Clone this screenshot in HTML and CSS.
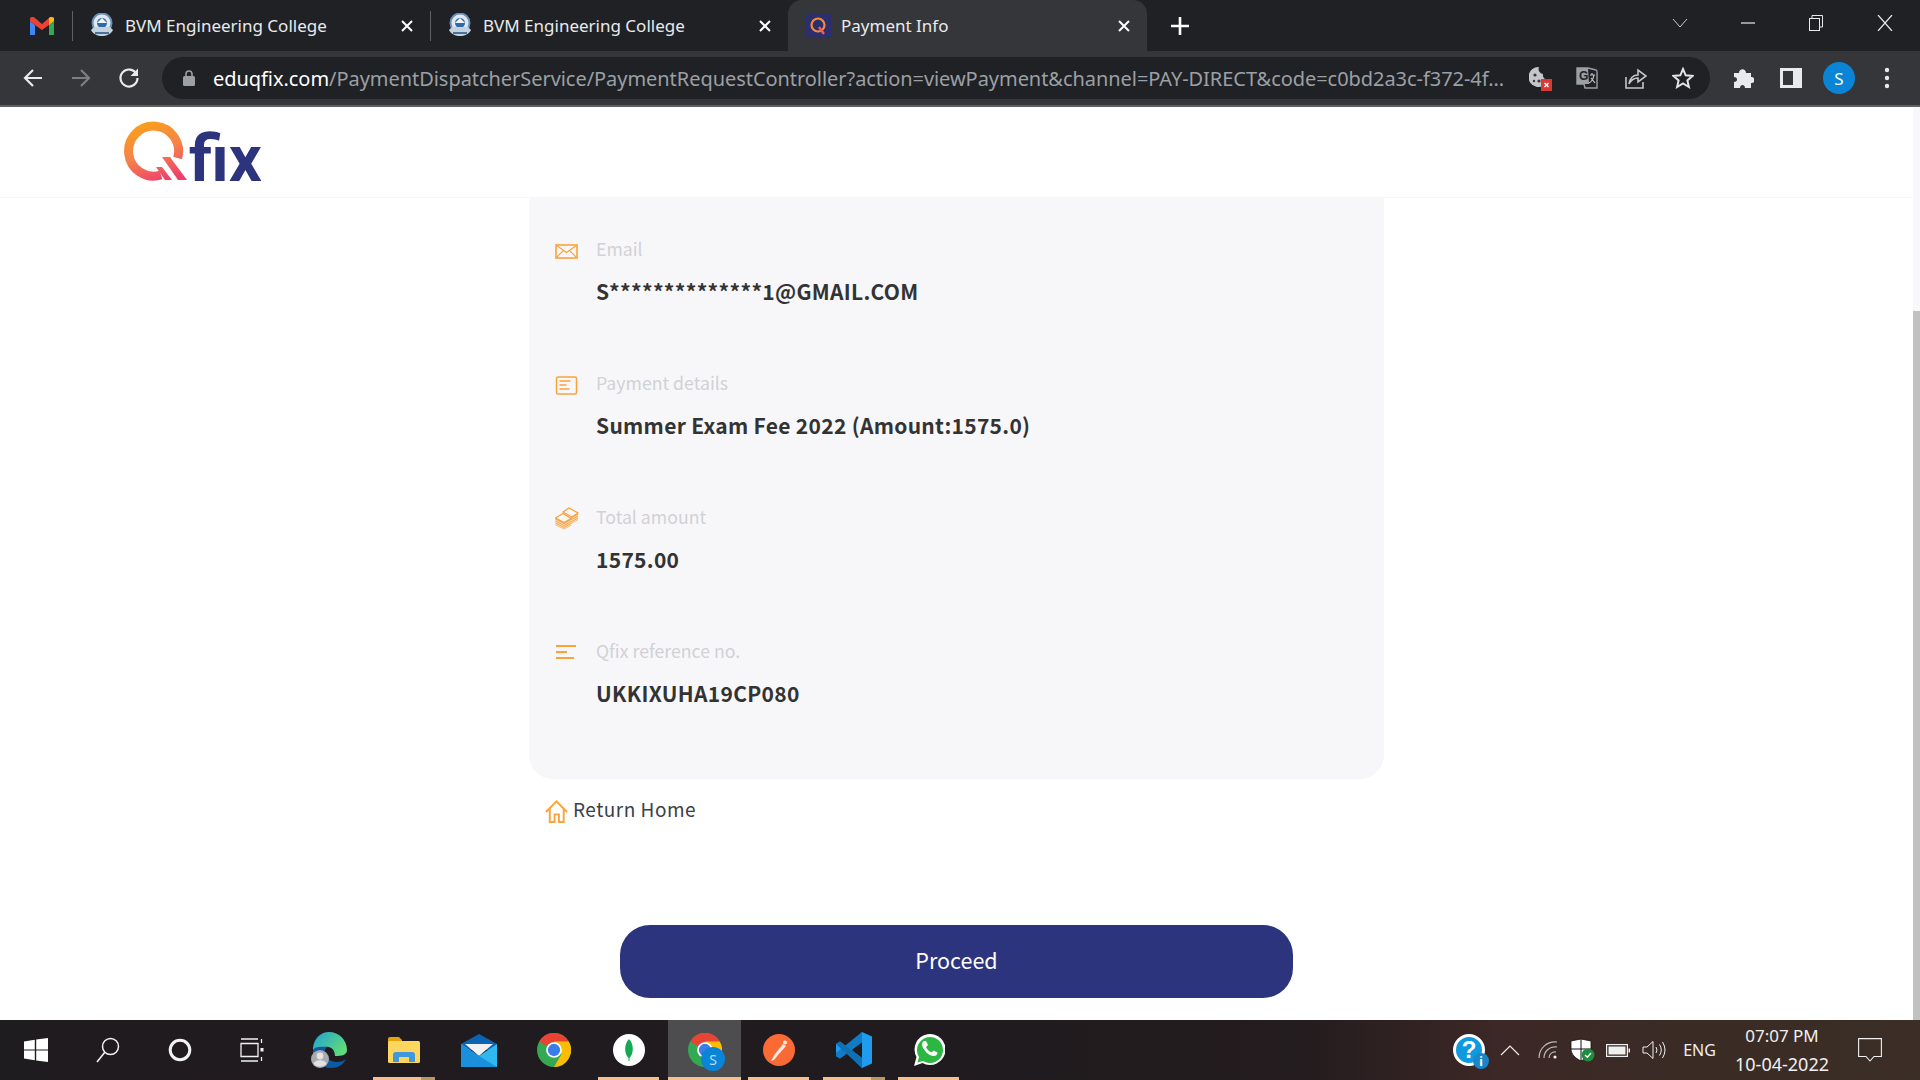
FILE: index.html
```html
<!DOCTYPE html>
<html lang="en">
<head>
    <meta charset="UTF-8">
    <title>Payment Info</title>
    <link rel="stylesheet" href="styles.css">
</head>
<body>

<!-- browser tabs -->
<div class="tabstrip">
    <div class="pinned-tab">
        <svg width="24" height="18" viewBox="0 0 24 18">
            <path d="M0 4 L0 18 L5 18 L5 8 Z" fill="#4285f4"/>
            <path d="M19 8 L19 18 L24 18 L24 4 Z" fill="#34a853"/>
            <path d="M0 2 C0 0 3 -1 5 1 L12 7 L19 1 C21 -1 24 0 24 2 L24 4 L19 8 L12 13 L5 8 L0 4 Z" fill="#ea4335"/>
            <path d="M19 1 C21 -1 24 0 24 2 L24 4 L19 8 Z" fill="#fbbc04"/>
        </svg>
    </div>
    <span class="tab-sep"></span>
    <div class="tab">
        <svg class="favicon" width="26" height="26" viewBox="0 0 26 26">
            <circle cx="13" cy="10" r="9.5" fill="#dfe8f0" stroke="#6c8fb5" stroke-width="2"/>
            <circle cx="13" cy="10" r="5" fill="#2f6aa8"/>
            <path d="M8 10 L18 10 L13 5 Z" fill="#f1f4f7"/>
            <path d="M2 17 C6 25 20 25 24 17 L21 14 L5 14 Z" fill="#c3d2df"/>
            <path d="M6 20 L20 20" stroke="#4c7199" stroke-width="2"/>
        </svg>
        <span class="tab-title">BVM Engineering College</span>
        <svg class="tab-close" width="12" height="12" viewBox="0 0 12 12"><path d="M1 1 L11 11 M11 1 L1 11" stroke="#fff" stroke-width="2"/></svg>
    </div>
    <span class="tab-sep"></span>
    <div class="tab">
        <svg class="favicon" width="26" height="26" viewBox="0 0 26 26">
            <circle cx="13" cy="10" r="9.5" fill="#dfe8f0" stroke="#6c8fb5" stroke-width="2"/>
            <circle cx="13" cy="10" r="5" fill="#2f6aa8"/>
            <path d="M8 10 L18 10 L13 5 Z" fill="#f1f4f7"/>
            <path d="M2 17 C6 25 20 25 24 17 L21 14 L5 14 Z" fill="#c3d2df"/>
            <path d="M6 20 L20 20" stroke="#4c7199" stroke-width="2"/>
        </svg>
        <span class="tab-title">BVM Engineering College</span>
        <svg class="tab-close" width="12" height="12" viewBox="0 0 12 12"><path d="M1 1 L11 11 M11 1 L1 11" stroke="#fff" stroke-width="2"/></svg>
    </div>
    <div class="tab tab-active">
        <svg class="favicon" width="25" height="25" viewBox="0 0 25 25">
            <rect width="25" height="25" rx="3" fill="#2b2f6b"/>
            <circle cx="12" cy="12" r="6.5" fill="none" stroke="#f58b3a" stroke-width="2.2"/>
            <path d="M13 14 L18 21" stroke="#ef5a5a" stroke-width="2.4"/>
        </svg>
        <span class="tab-title">Payment Info</span>
        <svg class="tab-close" width="12" height="12" viewBox="0 0 12 12"><path d="M1 1 L11 11 M11 1 L1 11" stroke="#fff" stroke-width="2"/></svg>
    </div>
    <svg class="new-tab" width="20" height="20" viewBox="0 0 20 20"><path d="M10 1 L10 19 M1 10 L19 10" stroke="#fff" stroke-width="2.6"/></svg>
    <div class="window-btns">
        <svg width="16" height="10" viewBox="0 0 16 10"><path d="M1 1 L8 9 L15 1" fill="none" stroke="#c9cacc" stroke-width="1"/></svg>
        <svg width="16" height="4" viewBox="0 0 16 4"><path d="M1 2 L15 2" stroke="#e8eaed" stroke-width="1.2"/></svg>
        <svg width="16" height="16" viewBox="0 0 16 16"><rect x="1.5" y="3.5" width="10" height="12" fill="none" stroke="#e8eaed"/><path d="M4 3 L4 0.5 L14.5 0.5 L14.5 12 L12 12" fill="none" stroke="#e8eaed"/></svg>
        <svg width="16" height="16" viewBox="0 0 16 16"><path d="M1 0 L15 16 M15 0 L1 16" stroke="#e8eaed" stroke-width="1.2"/></svg>
    </div>
</div>

<!-- address bar -->
<div class="toolbar">
    <span class="tool-btn">
        <svg width="20" height="20" viewBox="0 0 20 20"><path d="M19 10 L2 10 M10 2 L2 10 L10 18" fill="none" stroke="#e8eaed" stroke-width="2.2"/></svg>
    </span>
    <span class="tool-btn">
        <svg width="20" height="20" viewBox="0 0 20 20"><path d="M1 10 L18 10 M10 2 L18 10 L10 18" fill="none" stroke="#7d7f83" stroke-width="2.2"/></svg>
    </span>
    <span class="tool-btn">
        <svg width="22" height="22" viewBox="0 0 22 22"><path d="M18.5 7 A8.5 8.5 0 1 0 19.5 11" fill="none" stroke="#e8eaed" stroke-width="2.2"/><path d="M20 1.5 L20 9 L12.5 9 Z" fill="#e8eaed"/></svg>
    </span>
    <div class="omnibox">
        <svg class="lock" width="12" height="16" viewBox="0 0 12 16"><path d="M3 7 L3 4 A3 3 0 0 1 9 4 L9 7" fill="none" stroke="#9aa0a6" stroke-width="1.6"/><rect y="6" width="12" height="10" rx="1.5" fill="#9aa0a6"/></svg>
        <div class="url"><span class="url-host">eduqfix.com</span>/PaymentDispatcherService/PaymentRequestController?action=viewPayment&amp;channel=PAY-DIRECT&amp;code=c0bd2a3c-f372-4f...</div>
        <span class="tool-btn">
            <svg class="cookie-icon" width="24" height="26" viewBox="0 0 24 26">
                <path d="M10 2 A10 10 0 1 0 19 15 A5 5 0 0 1 14 9 A5 5 0 0 1 10 2 Z" fill="#c4c6c9"/>
                <circle cx="6" cy="10" r="1.6" fill="#35363a"/><circle cx="10" cy="16" r="1.6" fill="#35363a"/><circle cx="5" cy="16" r="1.2" fill="#35363a"/>
                <rect x="12" y="14" width="11" height="12" fill="#d93a36"/>
                <path d="M15.5 18 L19.5 22 M19.5 18 L15.5 22" stroke="#fff" stroke-width="1.4"/>
            </svg>
        </span>
        <span class="tool-btn">
            <svg width="22" height="22" viewBox="0 0 22 22">
                <path d="M1 1 L12 1 L20 3 Q21 3 21 5 L21 21 L9 21 L8 17 L1 17 Z" fill="none" stroke="#9aa0a6" stroke-width="1.4"/>
                <path d="M1 1 L12 1 L13 17 L1 17 Z" fill="#9aa0a6"/>
                <text class="translate-g" x="3" y="13">G</text>
                <path d="M14 8 L19 8 M16 6 L16 8 M18 8 Q17 14 13 16 M15 11 L19 16" fill="none" stroke="#c4c6c9" stroke-width="1.2"/>
            </svg>
        </span>
        <span class="tool-btn">
            <svg width="24" height="24" viewBox="0 0 24 24"><path d="M3 11 L3 22 L20 22 L20 16" fill="none" stroke="#c4c6c9" stroke-width="1.6"/><path d="M6 18 C7 12 10 9 15 9 L15 4 L23 10 L15 16 L15 12 C11 12 8 14 6 18 Z" fill="none" stroke="#c4c6c9" stroke-width="1.6"/></svg>
        </span>
        <span class="tool-btn">
            <svg width="22" height="22" viewBox="0 0 22 22"><path d="M11 2 L13.7 8.3 L20.5 8.9 L15.4 13.4 L16.9 20 L11 16.5 L5.1 20 L6.6 13.4 L1.5 8.9 L8.3 8.3 Z" fill="none" stroke="#e1e3e6" stroke-width="2"/></svg>
        </span>
    </div>
    <div class="toolbar-right">
        <span class="tool-btn">
            <svg width="22" height="22" viewBox="0 0 22 22"><path d="M2 6 L7 6 C7 1 14 1 14 6 L19 6 L19 10 C24 10 24 16 19 16 L19 21 L13 21 C13 17 8 17 8 21 L2 21 L2 15 C6 15 6 10 2 10 Z" fill="#e8eaed"/></svg>
        </span>
        <span class="tool-btn">
            <svg width="22" height="20" viewBox="0 0 22 20"><rect width="22" height="20" fill="#e8eaed"/><rect x="3" y="3" width="10" height="14" fill="#35363a"/></svg>
        </span>
        <span class="tool-btn"><span class="avatar">S</span></span>
        <span class="tool-btn">
            <svg width="6" height="22" viewBox="0 0 6 22"><circle cx="3" cy="3" r="2.2" fill="#e8eaed"/><circle cx="3" cy="11" r="2.2" fill="#e8eaed"/><circle cx="3" cy="19" r="2.2" fill="#e8eaed"/></svg>
        </span>
    </div>
</div>

<div class="viewport">
    <div class="page">
        <header class="site-header">
            <svg class="logo" width="140" height="84" viewBox="0 -8 140 84">
                <defs>
                    <linearGradient id="qGrad" gradientUnits="userSpaceOnUse" x1="20" y1="0" x2="40" y2="60">
                        <stop offset="0" stop-color="#f9a11b"/>
                        <stop offset="0.5" stop-color="#f6824a"/>
                        <stop offset="1" stop-color="#ee3e6d"/>
                    </linearGradient>
                </defs>
                <path d="M54.6 36 A25 25 0 1 0 38 53" fill="none" stroke="url(#qGrad)" stroke-width="9"/>
                <path d="M39 35 L47 35 L64 58 L55 58 Z" fill="url(#qGrad)"/>
                <path d="M33 45 L39 45 L49 58 L42 58 Z" fill="url(#qGrad)"/>
                <text class="logo-text" x="66" y="59">fix</text>
            </svg>
        </header>

        <div class="content">
            <div class="info-card">
                <div class="info-row">
                    <svg class="info-icon" width="24" height="24" viewBox="0 0 24 24">
                        <rect x="1" y="6" width="21" height="13" fill="none" stroke="#fba33a" stroke-width="1.6"/>
                        <path d="M1 6 L11.5 13.5 L22 6 M1 19 L8.5 11.5 M22 19 L14.5 11.5" fill="none" stroke="#fba33a" stroke-width="1.1"/>
                    </svg>
                    <div>
                        <div class="info-label">Email</div>
                        <div class="info-value">S**************1@GMAIL.COM</div>
                    </div>
                </div>
                <div class="info-row">
                    <svg class="info-icon" width="24" height="24" viewBox="0 0 24 24">
                        <rect x="1.5" y="4" width="20" height="17" rx="1.5" fill="none" stroke="#fba33a" stroke-width="1.5"/>
                        <path d="M4.5 8 L15.5 8 M4.5 12 L11.5 12 M4.5 16 L14.5 16" stroke="#fba33a" stroke-width="1.5"/>
                    </svg>
                    <div>
                        <div class="info-label">Payment details</div>
                        <div class="info-value">Summer Exam Fee 2022 (Amount:1575.0)</div>
                    </div>
                </div>
                <div class="info-row">
                    <svg class="info-icon" width="24" height="24" viewBox="0 0 24 24">
                        <path d="M16 10 L17 10 L23 6 L23 13 L16 17 Z" fill="#fba33a"/>
                        <path d="M16 12 L23 8 M16 14 L23 10 M16 16 L23 12" fill="none" stroke="#f7f7fa" stroke-width="0.7"/>
                        <path d="M8 5 L14 1 L23 6 L17 10 Z" fill="#f7f7fa" stroke="#fba33a" stroke-width="1.3"/>
                        <path d="M0.5 11 L9 15.5 L16 11.5 L16 18.5 L9 22.5 L0.5 18 Z" fill="#fba33a"/>
                        <path d="M0.5 13 L9 17.5 L16 13.5 M0.5 15 L9 19.5 L16 15.5 M0.5 17 L9 21.5 L16 17.5" fill="none" stroke="#f7f7fa" stroke-width="0.7"/>
                        <path d="M0.5 11 L8 6.5 L16 11.5 L9 15.5 Z" fill="#f7f7fa" stroke="#fba33a" stroke-width="1.3"/>
                    </svg>
                    <div>
                        <div class="info-label">Total amount</div>
                        <div class="info-value">1575.00</div>
                    </div>
                </div>
                <div class="info-row">
                    <svg class="info-icon" width="24" height="24" viewBox="0 0 24 24">
                        <path d="M1 5 L21 5 M1 11 L12 11 M1 17 L19 17" stroke="#fba33a" stroke-width="1.8"/>
                    </svg>
                    <div>
                        <div class="info-label">Qfix reference no.</div>
                        <div class="info-value">UKKIXUHA19CP080</div>
                    </div>
                </div>
            </div>

            <div class="return-home">
                <svg class="home-icon" width="23" height="23" viewBox="0 0 24 24"><path d="M1 12.5 L12 1.5 L23 12.5 M5 9 L5 23 L10 23 L10 15 L14.5 15 L14.5 23 L19.5 23 L19.5 9" fill="none" stroke="#fba33a" stroke-width="2"/></svg>
                <span>Return Home</span>
            </div>

            <button class="proceed-btn">Proceed</button>
        </div>
    </div>
    <div class="scrollbar"><div class="scroll-thumb"></div></div>
</div>

<!-- windows taskbar -->
<div class="taskbar">
    <div class="start-icons">
        <span class="start-slot">
            <svg width="24" height="24" viewBox="0 0 24 24"><path d="M0 3.4 L10.8 1.8 L10.8 11.4 L0 11.4 Z M12.2 1.6 L24 0 L24 11.4 L12.2 11.4 Z M0 12.6 L10.8 12.6 L10.8 22.2 L0 20.6 Z M12.2 12.6 L24 12.6 L24 24 L12.2 22.4 Z" fill="#fff"/></svg>
        </span>
        <span class="start-slot">
            <svg width="24" height="26" viewBox="0 0 24 26"><circle cx="14.5" cy="9.5" r="8" fill="none" stroke="#f2f2f2" stroke-width="1.5"/><path d="M9 15 L1 25" stroke="#f2f2f2" stroke-width="1.6"/></svg>
        </span>
        <span class="start-slot">
            <svg width="24" height="24" viewBox="0 0 24 24"><circle cx="12" cy="12" r="9.8" fill="none" stroke="#f2f2f2" stroke-width="3"/></svg>
        </span>
        <span class="start-slot">
            <svg width="24" height="24" viewBox="0 0 24 24"><path d="M1 1 L18 1 M1 23 L18 23 M1 5.5 L18 5.5 L18 18.5 L1 18.5 Z M21.5 1 L21.5 5 M21.5 19 L21.5 23" fill="none" stroke="#f2f2f2" stroke-width="1.3"/><rect x="20.5" y="10" width="3" height="3.5" fill="#f2f2f2"/></svg>
        </span>
    </div>
    <div class="app-icons">
        <span class="app-slot">
            <svg width="36" height="36" viewBox="0 0 36 36">
                <defs><linearGradient id="edgeGrad" x1="0" y1="0" x2="1" y2="0.6"><stop offset="0" stop-color="#1fa0d8"/><stop offset="1" stop-color="#5fdc79"/></linearGradient></defs>
                <path d="M2 16 C3 6 10 0 18 0 C28 0 36 8 36 18 C36 23 31 24 24 24 C24 18 20 14 14 15 C8 16 5 20 2 22 Z" fill="url(#edgeGrad)"/>
                <path d="M2 18 C2 28 10 36 20 36 C27 36 32 33 35 27 C30 31 22 31 17 27 C13 24 12 19 16 15 C9 14 3 15 2 18 Z" fill="#0c59a4"/>
                <circle cx="9" cy="27" r="9" fill="#a9aaac"/>
                <circle cx="9" cy="24" r="3.4" fill="#e2e2e3"/>
                <path d="M2.5 32 C3.5 27 14.5 27 15.5 32 A9 9 0 0 1 2.5 32 Z" fill="#e2e2e3"/>
            </svg>
        </span>
        <span class="app-slot app-open app-open-more">
            <svg width="32" height="26" viewBox="0 0 32 26">
                <path d="M0 2 Q0 0 2 0 L11 0 L14 3 L14 8 L0 8 Z" fill="#e2a30b"/>
                <rect y="4" width="32" height="22" rx="1.5" fill="#fcd65f"/>
                <path d="M5 25 L5 18 Q5 15 8 15 L24 15 Q27 15 27 18 L27 25 L21 25 L21 20 L11 20 L11 25 Z" fill="#3f97dc"/>
            </svg>
        </span>
        <span class="app-slot">
            <svg width="36" height="33" viewBox="0 0 36 33">
                <path d="M0 10 L18 0 L36 10 L36 16 L0 16 Z" fill="#0b63b3"/>
                <path d="M4 10 L32 10 L18 22 Z" fill="#eff1f2"/>
                <path d="M0 10 L18 22 L36 10 L36 33 L0 33 Z" fill="#2fb7f0"/>
                <path d="M0 33 L0 10 L18 22 L36 33 Z" fill="#1a90dc"/>
            </svg>
        </span>
        <span class="app-slot">
            <svg width="34" height="34" viewBox="0 0 32 32">
                <circle cx="16" cy="16" r="16" fill="#34a853"/>
                <path d="M2.14 8 A16 16 0 0 1 29.86 8 L16 8 L9 12 Z" fill="#ea4335"/>
                <path d="M29.86 8 A16 16 0 0 1 16 32 L23 20 L16 8 Z" fill="#fbbc04"/>
                <circle cx="16" cy="16" r="7.4" fill="#fff"/>
                <circle cx="16" cy="16" r="5.8" fill="#3b7de8"/>
            </svg>
        </span>
        <span class="app-slot app-open">
            <svg width="32" height="32" viewBox="0 0 32 32">
                <circle cx="16" cy="16" r="16" fill="#fff"/>
                <path d="M16 5 C21 10 21 19 16.6 24 L16.4 27 L15.6 27 L15.4 24 C11 19 11 10 16 5 Z" fill="#13aa52"/>
            </svg>
        </span>
        <span class="app-slot app-active app-open">
            <svg width="34" height="34" viewBox="0 0 32 32">
                <circle cx="16" cy="16" r="16" fill="#34a853"/>
                <path d="M2.14 8 A16 16 0 0 1 29.86 8 L16 8 L9 12 Z" fill="#ea4335"/>
                <path d="M29.86 8 A16 16 0 0 1 16 32 L23 20 L16 8 Z" fill="#fbbc04"/>
                <circle cx="16" cy="16" r="7.4" fill="#fff"/>
                <circle cx="16" cy="16" r="5.8" fill="#3b7de8"/>
            </svg>
            <span class="profile-badge">S</span>
        </span>
        <span class="app-slot app-open">
            <svg width="32" height="32" viewBox="0 0 32 32">
                <circle cx="16" cy="16" r="16" fill="#f96a35"/>
                <circle cx="22" cy="8.5" r="2" fill="#fde9df"/>
                <path d="M20 10 L23 12 L15 21 L11 26 L8 27 L12 20 Z" fill="#fde9df"/>
            </svg>
        </span>
        <span class="app-slot app-open app-open-more">
            <svg width="36" height="36" viewBox="0 0 36 36">
                <path d="M26 0 L36 4.5 L36 31.5 L26 36 L11 21 L4 26.5 L0 24 L0 12 L4 9.5 L11 15 Z M26 10 L15.5 18 L26 26 Z" fill="#1f9cf0"/>
                <path d="M26 0 L26 10 L4 26.5 L0 24 L0 21 Z" fill="#0f7cc6"/>
                <path d="M0 12 L4 9.5 L26 26 L26 36 Z" fill="#0e70b5"/>
            </svg>
        </span>
        <span class="app-slot app-open">
            <svg width="32" height="34" viewBox="0 0 32 34">
                <path d="M1 33 L3.5 24 A15.5 15.5 0 1 1 9.5 30 Z" fill="#fff"/>
                <path d="M4.5 29.5 L6 24 A13 13 0 1 1 10 28 Z" fill="#2bb741"/>
                <path d="M11 8 C9 9 8 12 11 16.5 C14 21 18 23 21 23 C23 23 24.5 21.5 24.5 19.5 L20.5 17.5 L18.5 19.5 C16 18.5 14 16.5 13 14 L15 12 L13 8 Z" fill="#fff"/>
            </svg>
        </span>
    </div>
    <div class="tray">
        <span class="tray-help">
            <span class="help-mark">?</span>
            <span class="help-info">i</span>
        </span>
        <svg width="20" height="11" viewBox="0 0 20 11"><path d="M1 10 L10 1 L19 10" fill="none" stroke="#f0f0f0" stroke-width="1.2"/></svg>
        <svg width="20" height="18" viewBox="0 0 20 18"><path d="M1 17 A16 16 0 0 1 19 1 M6 17 A11 11 0 0 1 19 6 M11 17 A6 6 0 0 1 18 11" fill="none" stroke="#bdbab7" stroke-width="1.2"/><circle cx="17" cy="16" r="1.6" fill="#f0f0f0"/></svg>
        <svg width="26" height="25" viewBox="0 0 26 25">
            <path d="M11 1 L1 3 L1 11 C1 16 5 20 11 23 C17 20 21 16 21 11 L21 3 Z" fill="#fff" stroke="#111" stroke-width="0.8"/>
            <path d="M11 1 L11 23 M1 11 L21 11" stroke="#111" stroke-width="1"/>
            <circle cx="18" cy="17" r="6.5" fill="#1e8e3e"/>
            <path d="M15 17 L17.3 19.2 L21 15" fill="none" stroke="#fff" stroke-width="1.3"/>
        </svg>
        <svg width="24" height="13" viewBox="0 0 24 13"><rect x="0.6" y="0.6" width="20.8" height="11.8" fill="none" stroke="#f0f0f0" stroke-width="1.2"/><rect x="2.5" y="2.5" width="17" height="8" fill="#f0f0f0"/><rect x="22.5" y="4.5" width="1.5" height="4" fill="#f0f0f0"/></svg>
        <svg width="24" height="20" viewBox="0 0 24 20"><path d="M1 7 L5 7 L11 1.5 L11 18.5 L5 13 L1 13 Z" fill="none" stroke="#f0f0f0" stroke-width="1"/><path d="M14 7 Q16 10 14 13 M17.5 4.5 Q21 10 17.5 15.5 M20.5 2 Q25.5 10 20.5 18" fill="none" stroke="#f0f0f0" stroke-width="1"/></svg>
        <span class="tray-lang">ENG</span>
        <div class="tray-clock">
            <div>07:07 PM</div>
            <div class="clock-date">10-04-2022</div>
        </div>
        <svg width="24" height="24" viewBox="0 0 24 24"><path d="M0.6 0.6 L23.4 0.6 L23.4 18.5 L16 18.5 L12 23 L8 18.5 L0.6 18.5 Z" fill="none" stroke="#f0f0f0" stroke-width="1.1"/></svg>
    </div>
</div>

</body>
</html>
```

FILE: styles.css
```css
* {
    box-sizing: border-box;
}

html,
body {
    margin: 0;
    height: 100%;
    overflow: hidden;
}

body {
    display: flex;
    flex-direction: column;
    font-family: "Noto Sans", sans-serif;
    background-color: #fff;
}

/* tab strip */
.tabstrip {
    display: flex;
    align-items: stretch;
    height: 51px;
    background-color: #202124;
    color: #e8eaed;
}

.pinned-tab {
    width: 72px;
    display: flex;
    align-items: center;
    padding-left: 30px;
}

.tab-sep {
    width: 1px;
    height: 30px;
    margin-top: 11px;
    background-color: #5f6063;
}

.tab {
    width: 357px;
    display: flex;
    align-items: center;
    padding: 0 17px 0 16px;
    font-size: 17px;
}

.tab-active {
    width: 359px;
    padding-left: 18px;
    background-color: #35363a;
    border-radius: 14px 14px 0 0;
}

.favicon {
    flex: none;
    margin-right: 10px;
}

.tab-title {
    white-space: nowrap;
}

.tab-close {
    margin-left: auto;
}

.new-tab {
    margin: 16px 0 0 23px;
}

.window-btns {
    margin-left: auto;
    width: 274px;
    display: grid;
    grid-template-columns: 68px 68px 68px 70px;
    align-items: center;
    justify-items: center;
    padding: 0 0 6px 0;
}

/* toolbar */
.toolbar {
    display: flex;
    align-items: center;
    height: 56px;
    padding: 1px 9px;
    background-color: #35363a;
    border-bottom: 2px solid #5f6063;
}

.tool-btn {
    flex: none;
    width: 48px;
    height: 42px;
    display: flex;
    align-items: center;
    justify-content: center;
}

.omnibox {
    width: 1548px;
    height: 42px;
    margin-left: 9px;
    display: flex;
    align-items: center;
    padding: 0 3px 0 21px;
    background-color: #202124;
    border-radius: 21px;
}

.lock {
    flex: none;
    margin-right: 18px;
}

.url {
    flex: 1;
    min-width: 0;
    font-size: 20px;
    letter-spacing: -0.05px;
    color: #9aa0a6;
    white-space: nowrap;
    overflow: hidden;
}

.url-host {
    color: #fff;
}

.cookie-icon {
    margin-left: 3px;
}

.translate-g {
    font-family: "Liberation Sans", sans-serif;
    font-size: 12px;
    font-weight: bold;
    fill: #202124;
}

.toolbar-right {
    display: flex;
    margin-left: 9px;
}

.avatar {
    width: 32px;
    height: 32px;
    border-radius: 50%;
    background-color: #0a84d6;
    color: #fff;
    font-size: 17px;
    display: flex;
    align-items: center;
    justify-content: center;
}

/* page */
.viewport {
    flex: 1;
    min-height: 0;
    display: flex;
    background-color: #fff;
}

.page {
    flex: 1;
    min-width: 0;
    font-family: "Noto Sans CJK SC", "Noto Sans", sans-serif;
}

.site-header {
    height: 91px;
    padding: 7px 0 0 123px;
    border-bottom: 1px solid #f6f6f8;
}

.logo {
    display: block;
}

.logo-text {
    font-family: Roboto, "Liberation Sans", sans-serif;
    font-size: 65px;
    font-weight: bold;
    fill: #2b347c;
}

.content {
    width: 855px;
    margin: 0 auto;
}

.info-card {
    padding: 36px 26px 72px;
    background-color: #f7f7fa;
    border-radius: 0 0 24px 24px;
}

.info-row {
    display: flex;
    margin-bottom: 63px;
}

.info-row:last-child {
    margin-bottom: 0;
}

.info-icon {
    flex: none;
    margin: 5px 17px 0 0;
}

.info-label {
    font-size: 17.7px;
    line-height: 28px;
    color: #d2d1d4;
}

.info-value {
    margin-top: 15px;
    font-size: 21px;
    line-height: 28px;
    font-weight: 700;
    letter-spacing: 0.3px;
    color: #333;
}

.return-home {
    display: flex;
    align-items: center;
    gap: 5px;
    height: 28px;
    margin: 15px 0 0 16px;
    font-size: 19px;
    letter-spacing: 0.5px;
    color: #3a3f4a;
}

.home-icon {
    margin-top: 6px;
}

.proceed-btn {
    display: block;
    width: 673px;
    height: 73px;
    margin: 103px auto 0;
    padding: 0 0 4px;
    border: none;
    border-radius: 30px;
    background-color: #2b347c;
    color: #fff;
    font-family: "Noto Sans CJK SC", "Noto Sans", sans-serif;
    font-size: 21.5px;
}

.scrollbar {
    width: 7px;
    padding-top: 204px;
    background-color: #f8f8fa;
}

.scroll-thumb {
    height: 100%;
    background-color: #c1c1c1;
}

/* taskbar */
.taskbar {
    height: 60px;
    display: flex;
    align-items: stretch;
    background: linear-gradient(90deg, #1f1c20 0, #1f1b1e 48%, #241c1e 68%, #3c2826 78%, #3a2c25 90%, #3b2e27 100%);
}

.start-icons {
    display: flex;
}

.start-slot {
    width: 72px;
    display: flex;
    align-items: center;
    justify-content: center;
}

.app-icons {
    display: flex;
    margin-left: 3px;
}

.app-slot {
    position: relative;
    width: 75px;
    display: flex;
    align-items: center;
    justify-content: center;
}

.app-open::after {
    content: "";
    position: absolute;
    left: 7px;
    right: 7px;
    bottom: 0;
    height: 3px;
    background-color: #f6c08a;
}

.app-open-more::after {
    right: 6px;
    background: linear-gradient(90deg, #f6c08a 77%, #bd9668 77%);
}

.app-active {
    width: 73px;
    margin-left: 2px;
    background-color: #4d4c4f;
}

.app-active::after {
    left: 0;
    right: 0;
}

.profile-badge {
    position: absolute;
    left: 33px;
    top: 27px;
    width: 24px;
    height: 24px;
    border-radius: 50%;
    background-color: #0a84d6;
    color: #b9ddf5;
    font-size: 14px;
    display: flex;
    align-items: center;
    justify-content: center;
}

.tray {
    margin-left: auto;
    display: grid;
    grid-template-columns: 40px 42px 34px 35px 36px 36px 55px 110px 66px;
    align-items: center;
    justify-items: center;
    padding-right: 17px;
    color: #f0f0f0;
}

.tray-help {
    position: relative;
    width: 32px;
    height: 32px;
    border-radius: 50%;
    background-color: #0f9ae0;
    border: 3px solid #fff;
    display: flex;
    align-items: center;
    justify-content: center;
}

.help-mark {
    font-family: "Liberation Sans", sans-serif;
    font-size: 24px;
    font-weight: bold;
    color: #fff;
}

.help-info {
    position: absolute;
    right: -7px;
    bottom: -6px;
    width: 16px;
    height: 16px;
    border-radius: 50%;
    background-color: #1a86c9;
    color: #fff;
    font-size: 12px;
    font-weight: bold;
    display: flex;
    align-items: center;
    justify-content: center;
}

.tray-lang {
    font-size: 16px;
}

.tray-clock {
    font-size: 17px;
    line-height: 28px;
    text-align: center;
    white-space: nowrap;
}

.clock-date {
    font-size: 18px;
}
```
